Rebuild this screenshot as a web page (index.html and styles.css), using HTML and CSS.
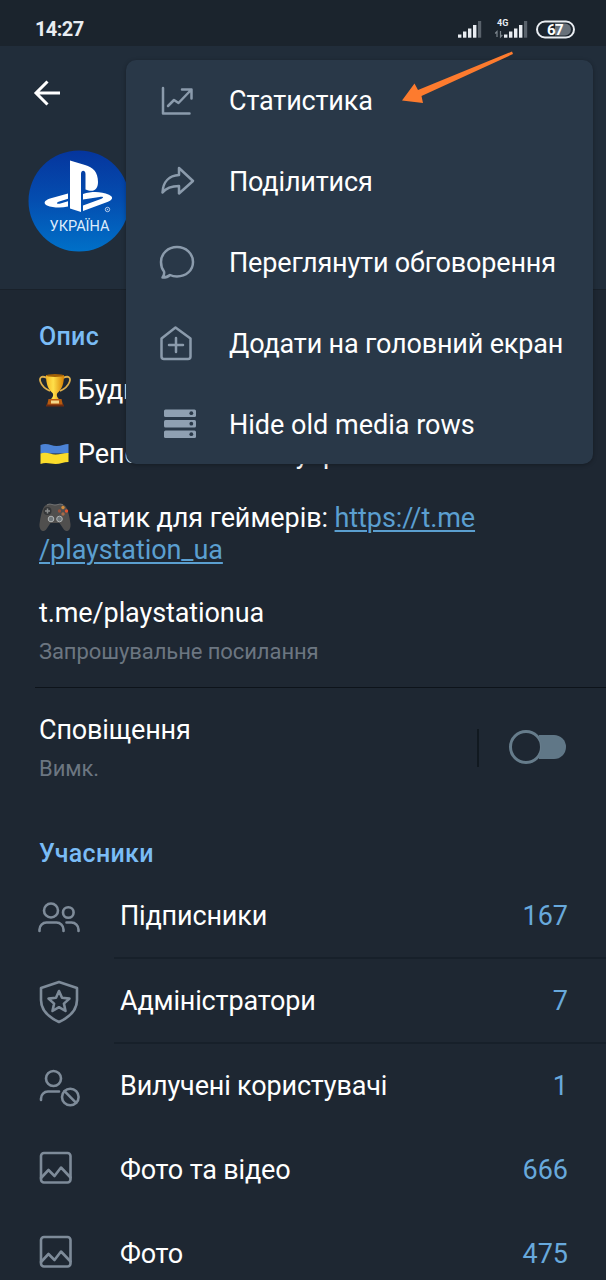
FILE: index.html
```html
<!DOCTYPE html>
<html lang="uk">
<head>
<meta charset="utf-8">
<title>Канал</title>
<link rel="stylesheet" href="styles.css">
</head>
<body>
<div class="screen">
  <div class="status">
    <span class="clock">14:27</span>
    <svg class="status-icons" width="122" height="46" viewBox="454 0 122 46">
      <g fill="#e9edf2">
        <rect x="458" y="34.5" width="3.4" height="3.2"/><rect x="463" y="31.5" width="3.4" height="6.2"/><rect x="468" y="28.5" width="3.4" height="9.2"/><rect x="473" y="25" width="3.4" height="12.7"/>
        <rect x="504" y="34.5" width="3.4" height="3.2"/><rect x="509" y="31.5" width="3.4" height="6.2"/><rect x="514" y="28.5" width="3.4" height="9.2"/><rect x="519" y="25" width="3.4" height="12.7"/>
      </g>
      <g fill="#59626b"><rect x="478" y="21" width="3.2" height="16.7"/><rect x="524" y="21" width="3.2" height="16.7"/></g>
      <path d="M497 37V31.5l-1.800 2M500.500 31v6l1.800-2" fill="none" stroke="#7d868e" stroke-width="1.200"/>
      <text class="net" x="497" y="25.500">4G</text>
      <path d="M555 23.500h10a6 6 0 0 1 0 12h-10z" fill="#68717a"/>
      <rect x="537" y="21.500" width="37" height="16" rx="8" fill="none" stroke="#e9edf2" stroke-width="2"/>
      <text class="batt" x="555" y="34.500">67</text>
    </svg>
  </div>

  <div class="header">
    <svg class="back" width="30" height="28" viewBox="0 0 30 28"><path d="M28 14H4M15.500 2.500L4 14l11.500 11.500" fill="none" stroke="#fff" stroke-width="3"/></svg>
    <svg class="avatar" width="102" height="102" viewBox="0 0 102 102">
      <defs><linearGradient id="sky" x1="0" y1="0" x2="0" y2="1"><stop offset="0" stop-color="#05359d"/><stop offset=".5" stop-color="#044eb0"/><stop offset="1" stop-color="#0070c8"/></linearGradient></defs>
      <circle cx="51" cy="51" r="50.500" fill="url(#sky)"/>
      <g fill="#fff">
        <path d="M42 10.500L57 15c8 2.200 13 7 13 17 0 7.500-4.500 11-12.500 7.500V24c0-4-4.500-4.500-4.500 0v38L42 58.500z"/>
        <path d="M40 43.500v5.200l-9.500 3c-3 1.300-1 2.700 2 1.800l7.500-2.200v5.200c-7 1.800-15 1.400-21-1-4-2-3-5 3-7z"/>
        <path d="M55 49.500V44c10-3 18-2.500 26 .8 5 2.300 3.500 5.200-1 7L55 61v-5.500l18.500-6.700c3-1.300 1-2.600-2-1.700z"/>
      </g>
      <circle cx="79.500" cy="59.500" r="2.200" fill="none" stroke="#b6cdec" stroke-width="1"/><circle cx="79.500" cy="59.500" r=".7" fill="#b6cdec"/>
      <text class="avatar-label" x="51.500" y="80.500" textLength="60" lengthAdjust="spacingAndGlyphs">УКРАЇНА</text>
    </svg>
  </div>

  <div class="about">
    <h2>Опис</h2>
    <div class="bio">
      <p><svg class="emoji" width="32" height="34" viewBox="0 0 32 34">
        <defs><linearGradient id="gold"><stop offset="0" stop-color="#f4b523"/><stop offset=".4" stop-color="#ffe04a"/><stop offset="1" stop-color="#d98204"/></linearGradient></defs>
        <path d="M8 5C2 2 0 5 1.500 9s5 7 9.500 9M24 5c6-3 8 0 6.500 4s-5 7-9.500 9" fill="none" stroke="#ddae4c" stroke-width="1.800"/>
        <path d="M7 2h18c0 9-2 14-6.500 18-1 1-1 4 1.500 6h-8c2.500-2 2.500-5 1.500-6C9 16 7 11 7 2z" fill="url(#gold)"/>
        <ellipse cx="16" cy="2.500" rx="9" ry="1.500" fill="#a36106"/>
        <path d="M9.500 26h13l1.500 6.500H8z" fill="#b95b10"/><path d="M12 27.500h8v3h-8z" fill="#f3d78a"/><path d="M7 31.500h18v2H7z" fill="#6c2b10"/>
      </svg><span>Будь</span></p>
      <p class="gap"><svg class="emoji" width="32" height="34" viewBox="0 0 32 34"><path d="M1.500 8c6-3 11 1 16 1 5 0 8-2 12-2v9.500H1.500z" fill="#4c83d6"/><path d="M1.500 16.500c6-2 10 1 15 1 5 0 9-2 13-1.500V25c-5 0-8 2-13 2-5 0-9-2-15 0z" fill="#fbdc2b"/></svg><span>Репости новин </span><span class="tail">українською</span></p>
      <p class="gap"><svg class="emoji" width="32" height="34" viewBox="0 0 32 34">
        <path d="M7 4c3-2 5 0 9 0s6-2 9 0c3 1.500 5 8 6.500 19 .5 7-4 9-7 5l-4-6h-9l-4 6c-3 4-7.500 2-7-5C2 12 4 5.500 7 4z" fill="#504f4e"/>
        <path d="M8 4c3-2 5 0 8 0s5-2 8 0" stroke="#777" fill="none"/>
        <circle cx="8.500" cy="10" r="4" fill="#343638"/><path d="M8.500 7.500v5M6 10h5" stroke="#8a8c8c" stroke-width="1.500"/>
        <circle cx="12" cy="18" r="2.800" fill="#70777a" stroke="#b1b4b5"/><circle cx="20.500" cy="18" r="2.800" fill="#70777a" stroke="#b1b4b5"/>
        <circle cx="24" cy="6.500" r="1.700" fill="#d28b3c"/><circle cx="20.500" cy="10" r="1.700" fill="#99503a"/><circle cx="27.500" cy="10" r="1.700" fill="#e1522e"/><circle cx="24" cy="13" r="1.700" fill="#a76b4a"/>
      </svg><span>чатик для геймерів: </span><a>https://t.me</a></p>
      <p><a>/playstation_ua</a></p>
    </div>
    <div class="title">t.me/playstationua</div>
    <div class="sub">Запрошувальне посилання</div>
  </div>

  <div class="notify">
    <div class="notify-text"><div class="title">Сповіщення</div><div class="sub">Вимк.</div></div>
    <div class="split"></div>
    <div class="switch"><div class="knob"></div><div class="track"></div></div>
  </div>

  <h2 class="members">Учасники</h2>
  <div class="rows">
    <div class="row"><div class="ic"><svg width="44" height="48" viewBox="37 893 44 48"><circle cx="51" cy="910.500" r="7"/><circle cx="68.300" cy="912.500" r="5.300"/><path d="M39.500 931v-1.500a7 7 0 0 1 7-7h10a7 7 0 0 1 7 7v1.500M66.500 922.500h5a7 7 0 0 1 7 7v1.500"/></svg></div><div class="cell line"><span>Підписники</span><b>167</b></div></div>
    <div class="row"><div class="ic"><svg width="44" height="48" viewBox="37 978 44 48"><path d="M59 982l18 6v12c0 10-7 17-18 22-11-5-18-12-18-22v-12z"/><path d="M59 991l3 6.800 7.500.8-5.600 5 1.600 7.400-6.500-3.800-6.500 3.800 1.600-7.400-5.600-5 7.500-.8z"/></svg></div><div class="cell line"><span>Адміністратори</span><b>7</b></div></div>
    <div class="row short"><div class="ic"><svg width="44" height="48" viewBox="37 1062 44 48"><circle cx="53.500" cy="1078.500" r="7.500"/><path d="M41 1100v-1.500a7 7 0 0 1 7-7h11"/><circle cx="70.300" cy="1097" r="8.300"/><path d="M64.500 1091.200l11.600 11.600"/></svg></div><div class="cell"><span>Вилучені користувачі</span><b>1</b></div></div>
    <div class="row short"><div class="ic"><svg width="44" height="48" viewBox="37 1146 44 48"><rect x="41" y="1153" width="29.500" height="29.500" rx="3"/><path d="M41 1178l7.500-8 6 6 6.500-8.500 9.500 10"/></svg></div><div class="cell"><span>Фото та відео</span><b>666</b></div></div>
    <div class="row short"><div class="ic"><svg width="44" height="48" viewBox="37 1146 44 48"><rect x="41" y="1153" width="29.500" height="29.500" rx="3"/><path d="M41 1178l7.500-8 6 6 6.500-8.500 9.500 10"/></svg></div><div class="cell"><span>Фото</span><b>475</b></div></div>
  </div>

  <div class="menu">
    <div class="item"><svg width="44" height="44" viewBox="155 79 44 44"><path d="M163 88v25.500h26.500M168 106l6-6 4.500 3 12.500-13M182 89.500h9.500v9"/></svg><span>Статистика</span></div>
    <div class="item"><svg width="44" height="44" viewBox="155 160 44 44"><path d="M179 168l14 13-14 12.500v-7.500c-7 0-12 1-16.500 6.500 .500-11 7-17 16.500-17.500z"/></svg><span>Поділитися</span></div>
    <div class="item"><svg width="44" height="44" viewBox="155 241 44 44"><path d="M177 247c9 0 16 6.500 16 15s-7 14.500-16 14.500c-2.500 0-5-.500-7-1.500-2 2-4.500 2.500-7.500 2.500 1.500-2 2-4 1.500-6-2-2.500-3-5.500-3-9.500 0-8.500 7-15 16-15z"/></svg><span>Переглянути обговорення</span></div>
    <div class="item"><svg width="44" height="44" viewBox="155 322 44 44"><path d="M161.500 338.500l14-11 15 11v18q0 2.500-2.500 2.500h-24q-2.500 0-2.500-2.500zM176 338v14M169 345h14"/></svg><span>Додати на головний екран</span></div>
    <div class="item latin"><svg width="44" height="44" viewBox="155 403 44 44"><g class="solid"><rect x="164" y="409.500" width="32" height="7.500" rx="1.500"/><rect x="164" y="420" width="32" height="7.500" rx="1.500"/><rect x="164" y="430.500" width="32" height="7.500" rx="1.500"/></g><g class="hole"><circle cx="191.300" cy="413.200" r="1.900"/><circle cx="191.300" cy="423.700" r="1.900"/><circle cx="191.300" cy="434.200" r="1.900"/></g></svg><span>Hide old media rows</span></div>
  </div>
  <svg class="pointer" width="114" height="56" viewBox="400 50 114 56"><path d="M512 51.500l1 2.500-91.500 42 1.500 7-21-2.500 12.500-17 3.500 6.500z" fill="#fd7b2e"/></svg>
</div>
</body>
</html>
```
FILE: styles.css
```css
* { box-sizing: border-box; }
body { margin: 0; background: #1e2732; font-family: Roboto, sans-serif; color: #fff; }
.screen { position: relative; width: 606px; height: 1280px; overflow: hidden; font-size: 27px; letter-spacing: -.17px; }
.status { height: 46px; background: #1b242d; display: flex; justify-content: space-between; padding: 0 30px 0 35px; }
.clock { font-size: 20px; font-weight: 700; line-height: 59px; letter-spacing: -.6px; color: #e9edf2; }
.status-icons { display: block; letter-spacing: 0; }
.net { font-size: 9px; font-weight: 700; fill: #e9edf2; }
.batt { font-size: 15px; font-weight: 700; fill: #fff; text-anchor: middle; letter-spacing: -.6px; }
.header { height: 244px; background: #212d3a; border-bottom: 1px solid #19212a; padding: 33px 28px 0; display: flex; flex-direction: column; gap: 43px; }
.back { display: block; margin-left: 4px; }
.avatar { display: block; letter-spacing: 0; }
.avatar-label { font-size: 15px; fill: #dcebfb; text-anchor: middle; }
h2 { margin: 0; font-size: 25px; line-height: 32px; font-weight: 500; color: #7abcf6; letter-spacing: .3px; }
.about { margin-left: 35px; padding: 31px 0 0 4px; height: 398px; border-bottom: 1px solid #0d131a; }
.bio { margin-top: 21px; line-height: 32px; letter-spacing: -.08px; }
.bio p { margin: 0; height: 32px; display: flex; align-items: center; white-space: pre; }
.bio .gap { margin-top: 32px; }
.emoji { margin-right: 7px; flex: none; }
.tail { margin-left: 23px; }
.bio a { color: #5b9fd0; text-decoration: underline; text-decoration-thickness: 2px; text-underline-offset: 3px; }
.title { line-height: 32px; }
.bio + .title { margin-top: 31px; letter-spacing: -.1px; }
.sub { font-size: 22px; line-height: 28px; color: #6c7681; margin-top: 9px; letter-spacing: -.08px; }
.notify { height: 120px; padding: 0 39px 0 39px; display: flex; align-items: center; }
.notify-text { flex: 1; }
.split { width: 2px; height: 38px; background: #111920; margin-right: 30px; }
.switch { width: 58px; display: flex; align-items: center; margin-bottom: 2px; }
.knob { width: 34px; height: 34px; border-radius: 50%; border: 3px solid #667c8b; flex: none; }
.track { width: 27px; height: 24px; margin-left: -4px; background: radial-gradient(circle at -13px 12px, transparent 15px, #607787 15.500px); border-radius: 0 12px 12px 0; flex: none; }
.members { margin: 30px 0 0 39px; }
.rows { margin-top: 4px; }
.row { height: 85px; display: flex; align-items: center; }
.short { height: 84px; }
.ic { width: 114px; padding-left: 37px; }
.ic svg { display: block; fill: none; stroke: #7e8b99; stroke-width: 2.6; stroke-linejoin: round; stroke-linecap: round; }
.cell { flex: 1; height: 100%; display: flex; align-items: center; justify-content: space-between; padding: 0 38px 0 6px; }
.line { border-bottom: 2px solid #17202a; }
.cell b { font-weight: 400; color: #68a9dc; letter-spacing: 0; }
.menu { position: absolute; left: 126px; top: 60px; width: 467px; height: 404px; border-radius: 10px; background: #293848; box-shadow: 0 1px 4px rgba(0, 0, 0, .3); }
.item { height: 81px; display: flex; align-items: center; padding-left: 29px; gap: 30px; white-space: nowrap; }
.latin { letter-spacing: 0; }
.item svg { fill: none; stroke: #8b9bac; stroke-width: 2.500; stroke-linejoin: round; stroke-linecap: round; }
.item .solid { fill: #8fa0b2; stroke: none; }
.item .hole { fill: #293848; stroke: none; }
.pointer { position: absolute; left: 400px; top: 50px; }
```
